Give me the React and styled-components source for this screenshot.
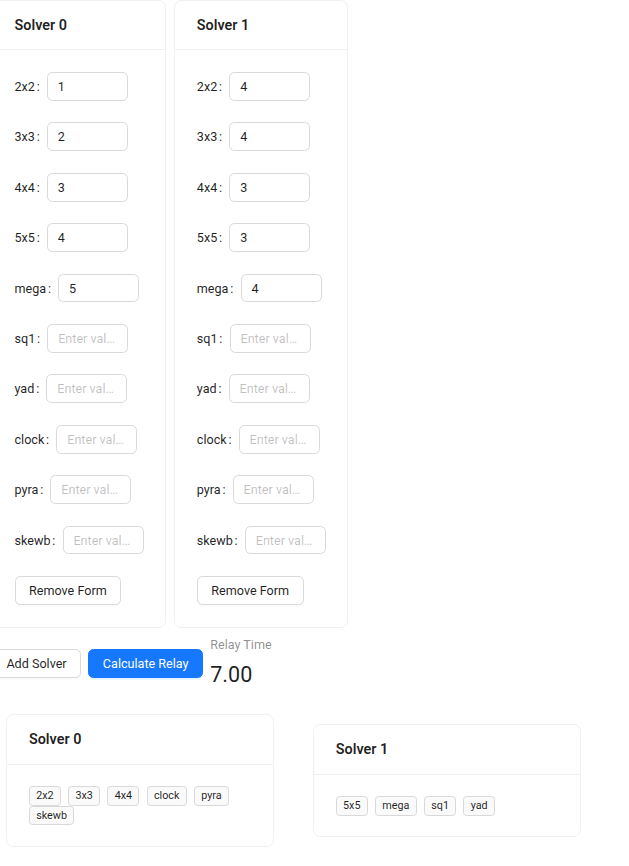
import React, { useState } from "react";
import styled, { createGlobalStyle } from "styled-components";

const events = ["2x2", "3x3", "4x4", "5x5", "mega", "sq1", "yad", "clock", "pyra", "skewb"];

const GlobalStyle = createGlobalStyle`
  body {
    margin: 0;
    background: #fff;
    font-family: Roboto, "Liberation Sans", sans-serif;
    color: rgba(0, 0, 0, 0.88);
    font-size: 14px;
  }
`;

// the whole page is laid out in antd units and scaled down
const Page = styled.div`
  zoom: 0.9;
  margin-left: -9px;
`;

const FormsRow = styled.div`
  display: flex;
  gap: 9px;
  align-items: flex-start;
`;

const Card = styled.div`
  background: #fff;
  border: 1px solid #f0f0f0;
  border-radius: 8px;
  width: ${(p) => (p.$wide ? "298px" : "max-content")};
  box-sizing: border-box;
`;

const CardHead = styled.div`
  min-height: ${(p) => (p.$summary ? "56px" : "54.5px")};
  padding: 0 24px;
  display: flex;
  align-items: center;
  font-size: 16px;
  font-weight: 600;
  border-bottom: 1px solid #f0f0f0;
  box-sizing: border-box;
`;

const CardBody = styled.div`
  padding: ${(p) => (p.$summary ? "23px 24px" : "24.5px 24px 25px")};
`;

const FormItem = styled.div`
  display: flex;
  align-items: center;
  height: 32px;
  margin-bottom: 24px;
`;

const Label = styled.label`
  font-size: 14px;
  white-space: nowrap;
  &::after {
    content: ":";
    margin: 0 8px 0 2px;
  }
`;

const Input = styled.input`
  width: 90px;
  height: 32px;
  box-sizing: border-box;
  padding: 4px 11px;
  border: 1px solid #d9d9d9;
  border-radius: 6px;
  font-family: inherit;
  font-size: 14px;
  color: rgba(0, 0, 0, 0.88);
  text-overflow: ellipsis;
  outline: none;
  &::placeholder {
    color: rgba(0, 0, 0, 0.25);
  }
`;

const Button = styled.button`
  height: 32px;
  padding: 4px 15px;
  border-radius: 6px;
  font-family: inherit;
  font-size: 14px;
  cursor: pointer;
  border: 1px solid ${(p) => (p.$primary ? "#1677ff" : "#d9d9d9")};
  background: ${(p) => (p.$primary ? "#1677ff" : "#fff")};
  color: ${(p) => (p.$primary ? "#fff" : "rgba(0, 0, 0, 0.88)")};
  box-shadow: ${(p) => (p.$primary ? "0 2px 0 rgba(5, 145, 255, 0.1)" : "0 2px 0 rgba(0, 0, 0, 0.02)")};
`;

const ActionRow = styled.div`
  display: flex;
  align-items: center;
  gap: 8px;
  margin-top: 7px;
`;

const Statistic = styled.div`
  display: flex;
  flex-direction: column;
`;

const StatTitle = styled.div`
  font-size: 14px;
  line-height: 22px;
  margin-bottom: 4px;
  color: rgba(0, 0, 0, 0.45);
`;

const StatValue = styled.div`
  font-size: 24px;
  line-height: 38px;
`;

const SummaryRow = styled.div`
  display: flex;
  align-items: center;
  gap: 43px;
  margin: 24px 0 0 16px;
`;

const Tag = styled.span`
  display: inline-block;
  height: 22px;
  box-sizing: border-box;
  padding: 0 7px;
  margin-right: 8px;
  font-size: 12px;
  line-height: 20px;
  background: #fafafa;
  border: 1px solid #d9d9d9;
  border-radius: 4px;
  color: rgba(0, 0, 0, 0.88);
`;

const TagWrap = styled.div`
  line-height: 0;
`;

export default function App() {
  const [solvers] = useState([
    { "2x2": "1", "3x3": "2", "4x4": "3", "5x5": "4", mega: "5" },
    { "2x2": "4", "3x3": "4", "4x4": "3", "5x5": "3", mega: "4" },
  ]);
  const assigned = [
    ["2x2", "3x3", "4x4", "clock", "pyra", "skewb"],
    ["5x5", "mega", "sq1", "yad"],
  ];

  return (
    <Page>
      <GlobalStyle />
      <FormsRow>
        {solvers.map((s, i) => (
          <Card key={i}>
            <CardHead>Solver {i}</CardHead>
            <CardBody>
              {events.map((ev) => (
                <FormItem key={ev}>
                  <Label>{ev}</Label>
                  <Input defaultValue={s[ev] || ""} placeholder="Enter value" />
                </FormItem>
              ))}
              <Button>Remove Form</Button>
            </CardBody>
          </Card>
        ))}
      </FormsRow>

      <ActionRow>
        <Button>Add Solver</Button>
        <Button $primary>Calculate Relay</Button>
        <Statistic>
          <StatTitle>Relay Time</StatTitle>
          <StatValue>7.00</StatValue>
        </Statistic>
      </ActionRow>

      <SummaryRow>
        {assigned.map((list, i) => (
          <Card key={i} $wide>
            <CardHead $summary>Solver {i}</CardHead>
            <CardBody $summary>
              <TagWrap>
                {list.map((ev) => (
                  <Tag key={ev}>{ev}</Tag>
                ))}
              </TagWrap>
            </CardBody>
          </Card>
        ))}
      </SummaryRow>
    </Page>
  );
}
